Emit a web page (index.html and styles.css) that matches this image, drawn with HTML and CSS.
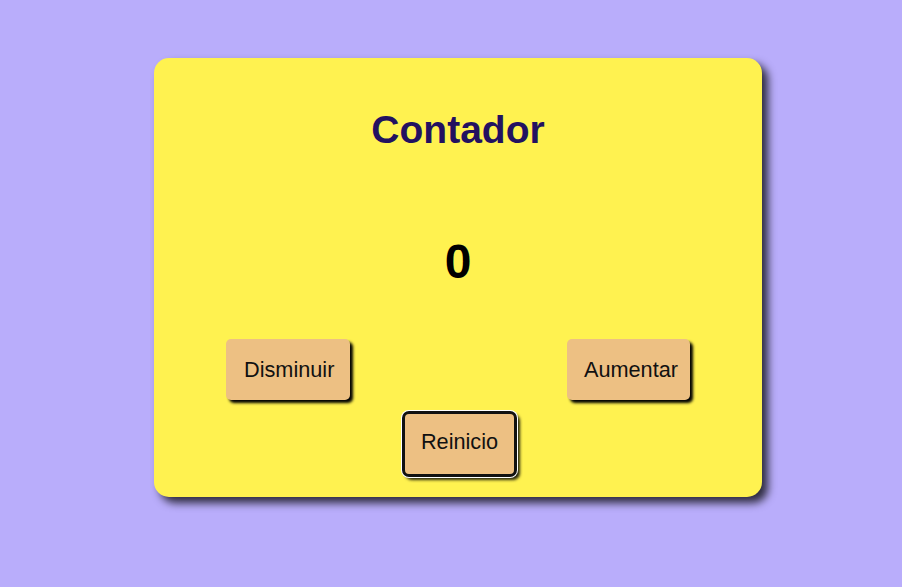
FILE: index.html
```html
<!DOCTYPE html>
<html lang="es">
<head>
<meta charset="utf-8">
<title>Contador</title>
<link rel="stylesheet" href="styles.css">
</head>
<body>
  <main class="card">
    <h1 class="title">Contador</h1>
    <p class="value">0</p>
    <div class="row">
      <button class="btn">Disminuir</button>
      <button class="btn btn-tight">Aumentar</button>
    </div>
    <div class="row row-center">
      <button class="btn btn-focus">Reinicio</button>
    </div>
  </main>
</body>
</html>
```

FILE: styles.css
```css
html, body {
  margin: 0;
  padding: 0;
}

body {
  background: #b9adfb;
  font-family: "Liberation Sans", Arial, sans-serif;
  min-height: 587px;
  overflow: hidden;
}

.card {
  box-sizing: border-box;
  width: 608px;
  height: 439px;
  margin: 58px 0 0 154px;
  padding: 49px 0 20px;
  background: #fff250;
  border-radius: 15px;
  box-shadow: 6px 6px 9px rgba(0, 0, 0, 0.75);
  display: flex;
  flex-direction: column;
}

.title {
  margin: 0;
  font-size: 39px;
  line-height: 45px;
  font-weight: bold;
  color: #231160;
  text-align: center;
}

.value {
  margin: 82px 0 0;
  font-size: 48px;
  line-height: 55px;
  font-weight: bold;
  color: #000;
  text-align: center;
}

.row {
  display: flex;
  justify-content: space-between;
  padding: 0 72px;
  margin-top: 50px;
}

.row-center {
  justify-content: center;
  margin-top: 11px;
  padding: 0 0 0 3px;
}

.btn {
  font-family: "Liberation Sans", Arial, sans-serif;
  font-size: 21.7px;
  line-height: 25px;
  color: #111;
  background: #edc083;
  border: none;
  border-radius: 5px;
  padding: 18px 16px 18px 18px;
  box-shadow: 3px 3px 3px #000;
}

.btn-tight {
  padding: 18px 12px 18px 17px;
}

.btn-focus {
  border: 3px solid #111;
  border-radius: 7px;
  padding: 15px 16px 20px;
  box-shadow: 0 0 0 1px #fff, 3px 3px 3px rgba(0, 0, 0, 0.85);
}
```
